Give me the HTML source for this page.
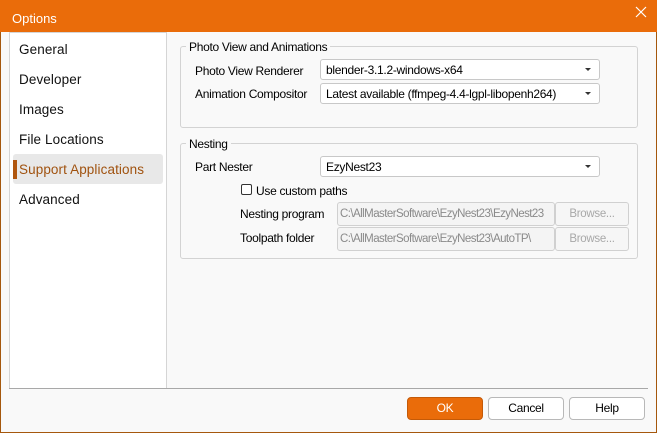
<!DOCTYPE html>
<html><head><style>
*{box-sizing:border-box;margin:0;padding:0}
body{width:657px;height:433px;overflow:hidden;background:#f9f9f9;font-family:"Liberation Sans",sans-serif;font-size:12px;letter-spacing:-0.3px;color:#000;position:relative}
.win{position:absolute;left:0;top:0;width:657px;height:433px;border:1px solid #a5580d}
.title{position:absolute;left:0;top:0;width:657px;height:32px;background:#ea6c0a;color:#fff;font-size:13px;letter-spacing:0}
.abs{position:absolute}
.list{position:absolute;left:9px;top:32px;width:158px;height:357px;background:#fff;border:1px solid #d5d5d5;letter-spacing:0.1px}
.li{position:absolute;left:9px;font-size:13.5px;color:#111}
.sel{position:absolute;left:3px;top:121px;width:150px;height:30px;background:#e8e8e8;border-radius:3px}
.grp{position:absolute;border:1px solid #d3d3d3;border-radius:3px}
.leg{position:absolute;background:#f9f9f9;padding:0 3px}
.combo{position:absolute;height:21px;background:#fff;border:1px solid #c8c8c8;border-radius:3px;padding:3px 5px;font-size:12px}
.combo:after{content:"";position:absolute;right:8px;top:8px;border-left:3px solid transparent;border-right:3px solid transparent;border-top:3px solid #333}
.txt{position:absolute;height:24px;background:#f4f4f4;border:1px solid #d0d0d0;border-radius:3px;padding:5px 2px;color:#8a8a8a;font-size:11.5px;letter-spacing:-0.55px;overflow:hidden;white-space:nowrap}
.br{position:absolute;width:74px;height:24px;border:1px solid #d0d0d0;border-radius:3px;background:#f6f6f6;color:#a8a8a8;text-align:center;line-height:22px;font-size:11.5px}
.btn{position:absolute;top:397px;width:76px;height:23px;border:1px solid #b8b8b8;border-radius:4px;background:#fff;text-align:center;line-height:21px}
</style></head><body>
<div class="win"></div>
<div class="title"><span class="abs" style="left:12px;top:11px">Options</span>
<svg class="abs" style="left:635px;top:6px" width="12" height="12"><path d="M1 1L11 11M11 1L1 11" stroke="#fff" stroke-width="1.2"/></svg></div>
<div class="list">
<div class="sel"></div>
<div class="abs" style="left:3px;top:127px;width:4px;height:19px;background:#b0560f"></div>
<div class="li" style="top:9px">General</div>
<div class="li" style="top:39px">Developer</div>
<div class="li" style="top:69px">Images</div>
<div class="li" style="top:99px">File Locations</div>
<div class="li" style="top:129px;color:#a0520f">Support Applications</div>
<div class="li" style="top:159px">Advanced</div>
</div>
<div class="grp" style="left:180px;top:46px;width:458px;height:82px"></div>
<div class="leg" style="left:186px;top:40px">Photo View and Animations</div>
<div class="abs" style="left:195px;top:64px">Photo View Renderer</div>
<div class="combo" style="left:320px;top:59px;width:280px">blender-3.1.2-windows-x64</div>
<div class="abs" style="left:195px;top:87px">Animation Compositor</div>
<div class="combo" style="left:320px;top:83px;width:280px">Latest available (ffmpeg-4.4-lgpl-libopenh264)</div>
<div class="grp" style="left:180px;top:143px;width:458px;height:116px"></div>
<div class="leg" style="left:186px;top:137px">Nesting</div>
<div class="abs" style="left:195px;top:160px">Part Nester</div>
<div class="combo" style="left:320px;top:156px;width:280px">EzyNest23</div>
<div class="abs" style="left:241px;top:184px;width:11px;height:11px;border:1px solid #333;border-radius:2px;background:#fff"></div>
<div class="abs" style="left:256px;top:184px">Use custom paths</div>
<div class="abs" style="left:240px;top:207px">Nesting program</div>
<div class="txt" style="left:337px;top:202px;width:218px">C:\AllMasterSoftware\EzyNest23\EzyNest23</div>
<div class="br" style="left:555px;top:202px">Browse...</div>
<div class="abs" style="left:240px;top:231px">Toolpath folder</div>
<div class="txt" style="left:337px;top:227px;width:218px">C:\AllMasterSoftware\EzyNest23\AutoTP\</div>
<div class="br" style="left:555px;top:227px">Browse...</div>
<div class="abs" style="left:9px;top:388px;width:639px;height:1px;background:#a8a8a8"></div>
<div class="btn" style="left:407px;background:#ea6c0a;border-color:#c45a08;color:#fff">OK</div>
<div class="btn" style="left:488px">Cancel</div>
<div class="btn" style="left:569px">Help</div>
</body></html>
